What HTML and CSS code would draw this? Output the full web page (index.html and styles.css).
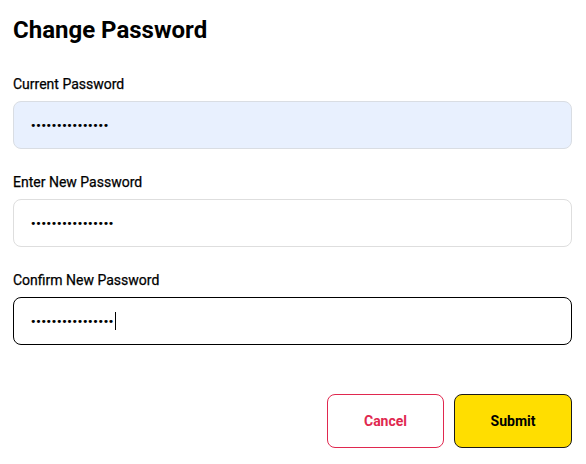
FILE: index.html
```html
<!DOCTYPE html>
<html>
<head>
<meta charset="utf-8">
<link rel="stylesheet" href="styles.css">
</head>
<body>
<div class="page">
  <h1 class="title">Change Password</h1>
  <div class="field">
    <div class="label">Current Password</div>
    <div class="input autofill"><span class="dots">•••••••••••••••</span></div>
  </div>
  <div class="field">
    <div class="label">Enter New Password</div>
    <div class="input"><span class="dots">••••••••••••••••</span></div>
  </div>
  <div class="field">
    <div class="label">Confirm New Password</div>
    <div class="input focused"><span class="dots">••••••••••••••••</span><span class="caret"></span></div>
  </div>
  <div class="actions">
    <button class="btn cancel">Cancel</button>
    <button class="btn submit">Submit</button>
  </div>
</div>
</body>
</html>
```
FILE: styles.css
```css
* { box-sizing: border-box; }
html, body { margin: 0; padding: 0; background: #fff; }
body { font-family: Roboto, "Liberation Sans", sans-serif; color: #000; }
.page { padding: 16px 14px 0 13px; width: 586px; }
.title { margin: 0; font-size: 24px; line-height: 28px; font-weight: 700; }
.title + .field { margin-top: 32px; }
.field { display: flex; flex-direction: column; }
.field + .field { margin-top: 25px; }
.label { font-size: 14px; line-height: 16px; font-weight: 400; -webkit-text-stroke: 0.25px #000; margin-bottom: 9px; }
.input { height: 48px; border: 1px solid #dedede; border-radius: 8px; padding: 0 16px; display: flex; align-items: center; background: #fff; }
.input.autofill { background: #e8f0fe; border-color: #d9dde3; }
.input.focused { border-color: #000; }
.dots { font-family: "DejaVu Sans", sans-serif; font-size: 11px; letter-spacing: -1.3px; line-height: 1; }
.caret { display: inline-block; width: 1px; height: 18px; background: #000; margin-left: 2px; }
.actions { display: flex; justify-content: flex-end; gap: 10px; margin-top: 49px; }
.btn { width: 117px; height: 54px; border-radius: 8px; font-family: Roboto, "Liberation Sans", sans-serif; font-size: 14px; font-weight: 700; cursor: pointer; }
.cancel { background: #fff; border: 1px solid #e0284f; color: #e0284f; }
.submit { width: 118px; background: #ffde00; border: 1px solid #1a1a1a; color: #000; }
```
